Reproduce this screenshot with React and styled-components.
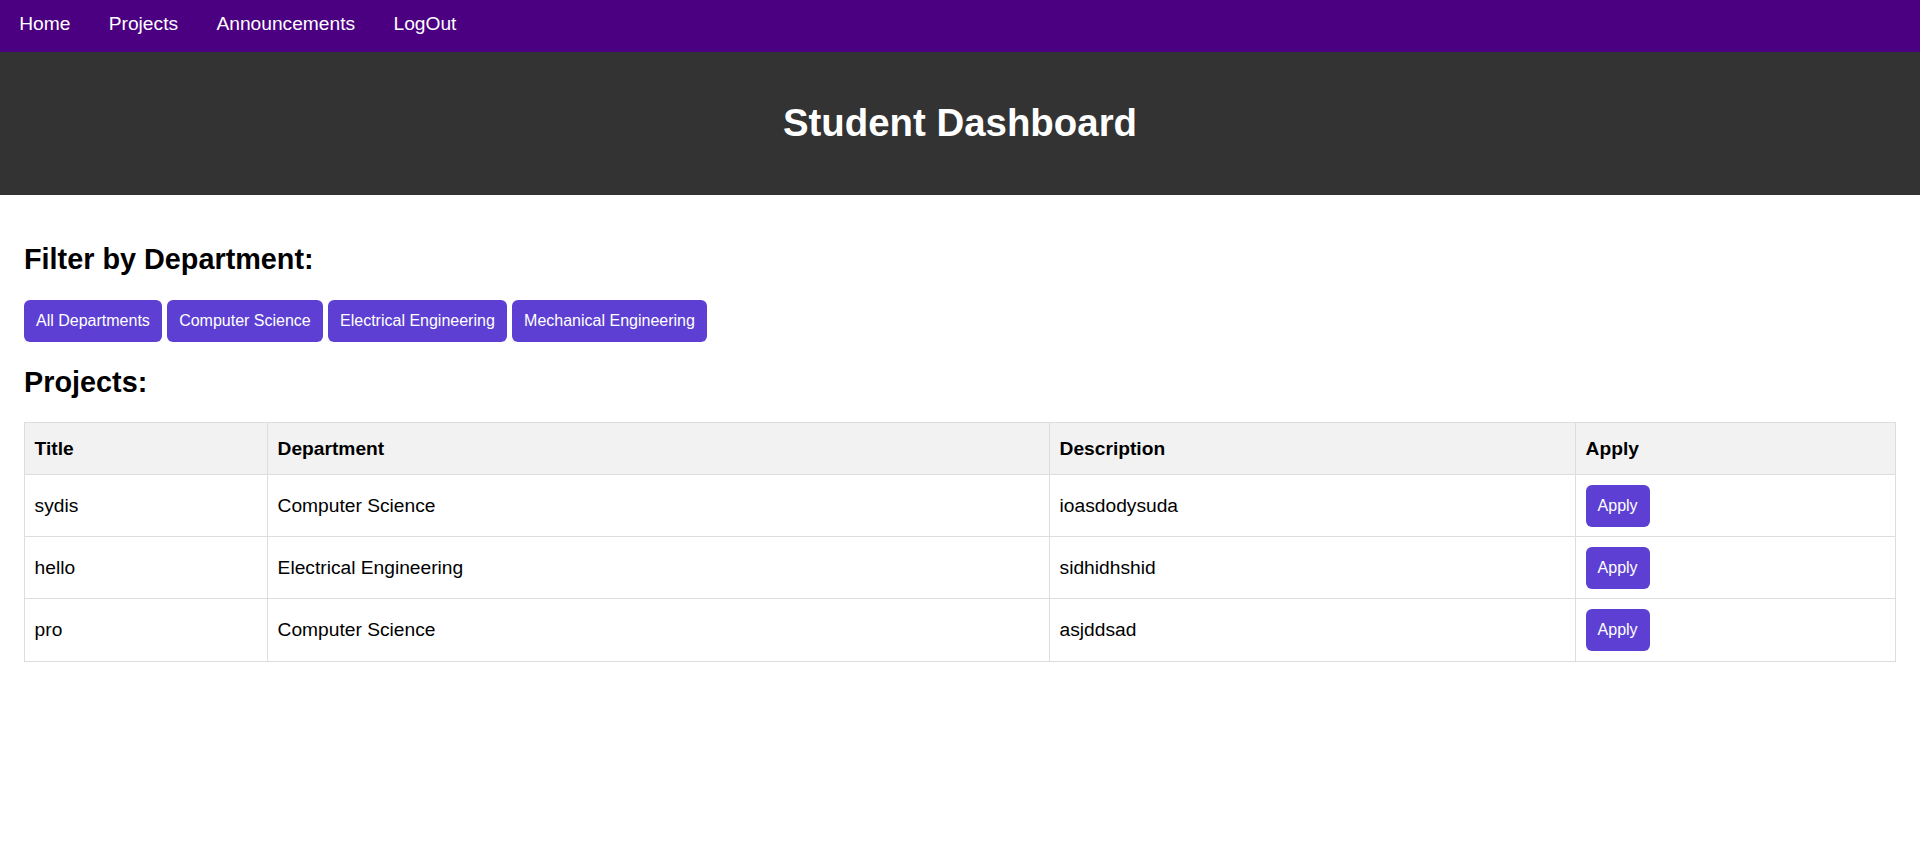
import { useState } from "react";
import styled, { createGlobalStyle } from "styled-components";

const GlobalStyle = createGlobalStyle`
  body {
    margin: 0;
    background: #fff;
    font-family: "Liberation Sans", Arial, sans-serif;
    color: #000;
  }
`;

const departments = [
  "All Departments",
  "Computer Science",
  "Electrical Engineering",
  "Mechanical Engineering",
];

const projects = [
  { title: "sydis", department: "Computer Science", description: "ioasdodysuda" },
  { title: "hello", department: "Electrical Engineering", description: "sidhidhshid" },
  { title: "pro", department: "Computer Science", description: "asjddsad" },
];

const App = () => {
  const [filter, setFilter] = useState("All Departments");

  const visible =
    filter === "All Departments"
      ? projects
      : projects.filter((p) => p.department === filter);

  return (
    <>
      <GlobalStyle />
      <NavBar>
        <NavLink href="#">Home</NavLink>
        <NavLink href="#">Projects</NavLink>
        <NavLink href="#">Announcements</NavLink>
        <NavLink href="#">LogOut</NavLink>
      </NavBar>

      <Header>
        <Title>Student Dashboard</Title>
      </Header>

      <Container>
        <SectionTitle>Filter by Department:</SectionTitle>
        <FilterRow>
          {departments.map((d) => (
            <PurpleButton key={d} onClick={() => setFilter(d)}>
              {d}
            </PurpleButton>
          ))}
        </FilterRow>

        <SectionTitle>Projects:</SectionTitle>
        <Table>
          <colgroup>
            <Col $width="243px" />
            <Col $width="782px" />
            <Col $width="526px" />
            <Col />
          </colgroup>
          <thead>
            <tr>
              <Th>Title</Th>
              <Th>Department</Th>
              <Th>Description</Th>
              <Th>Apply</Th>
            </tr>
          </thead>
          <tbody>
            {visible.map((p) => (
              <tr key={p.title}>
                <Td>{p.title}</Td>
                <Td>{p.department}</Td>
                <Td>{p.description}</Td>
                <Td>
                  <PurpleButton>Apply</PurpleButton>
                </Td>
              </tr>
            ))}
          </tbody>
        </Table>
      </Container>
    </>
  );
};

const NavBar = styled.nav`
  display: flex;
  background-color: #4b0082;
  padding: 13px 0 16.5px;
`;

const NavLink = styled.a`
  padding: 0 19.2px;
  color: #fff;
  text-decoration: none;
  font-size: 19.2px;
  line-height: 22px;
`;

const Header = styled.header`
  background-color: #333;
  color: #fff;
  text-align: center;
  padding: 24px;
`;

const Title = styled.h1`
  margin: 25.7px 0;
  font-size: 38.4px;
  line-height: 44px;
  font-weight: 700;
`;

const Container = styled.main`
  padding: 24px;
`;

const SectionTitle = styled.h2`
  margin: 23.9px 0;
  font-size: 28.8px;
  line-height: 33px;
  font-weight: 700;
`;

const FilterRow = styled.div`
  display: flex;
  gap: 5.3px;
`;

const PurpleButton = styled.button`
  background-color: #5d3fd3;
  color: #fff;
  border: none;
  border-radius: 6px;
  padding: 12px;
  font-family: "Liberation Sans", Arial, sans-serif;
  font-size: 16px;
  line-height: 18px;
  cursor: pointer;
`;

const Table = styled.table`
  width: 100%;
  border-collapse: collapse;
  table-layout: fixed;
`;

const Col = styled.col`
  width: ${(p) => p.$width || "auto"};
`;

const Th = styled.th`
  background-color: #f2f2f2;
  border: 1px solid #ddd;
  padding: 14.3px 9.6px;
  text-align: left;
  font-size: 19.2px;
  line-height: 22px;
  font-weight: 700;
`;

const Td = styled.td`
  border: 1px solid #ddd;
  padding: 9.6px;
  text-align: left;
  font-size: 19.2px;
  line-height: 22px;
  vertical-align: middle;
`;

export default App;
